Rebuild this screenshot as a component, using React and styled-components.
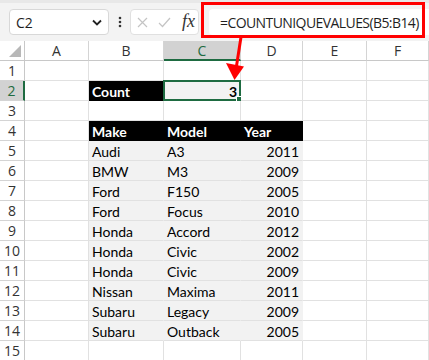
import React from "react"
import styled, { createGlobalStyle } from "styled-components"

const GlobalStyle = createGlobalStyle`
  body {
    margin: 0;
    background: #ffffff;
    overflow: hidden;
    font-family: Lato, "Liberation Sans", sans-serif;
  }
`

const Page = styled.div`
  position: relative;
  width: 429px;
  height: 360px;
  overflow: hidden;
`

const Toolbar = styled.div`
  background: #f3f3f3;
  border-top: 3px solid #e8e8e8;
  display: flex;
  align-items: center;
  padding: 0 0 0 9px;
  box-sizing: border-box;
  height: 41px;
`

const NameBox = styled.div`
  width: 100px;
  height: 26px;
  box-sizing: border-box;
  background: #fff;
  border: 1px solid #d8d8d8;
  border-radius: 4px;
  display: flex;
  align-items: center;
  justify-content: space-between;
  padding: 0 6px 0 6px;
  font-size: 14px;
  color: #1f1f1f;
  font-family: "Open Sans", "Liberation Sans", sans-serif;
`

const Dots = styled.div`
  width: 21px;
  display: flex;
  justify-content: center;
`

const FxBox = styled.div`
  width: 69px;
  height: 26px;
  box-sizing: border-box;
  background: #fff;
  border: 1px solid #e0e0e0;
  border-radius: 4px;
  display: flex;
  align-items: center;
  gap: 10px;
  padding-left: 6px;
`

const Fx = styled.span`
  font-family: "Liberation Serif", serif;
  font-style: italic;
  font-size: 18px;
  color: #333;
  margin-left: 1px;
  margin-top: -2px;
`

const FormulaInput = styled.div`
  margin-left: 10px;
  flex: 1;
  height: 26px;
  box-sizing: border-box;
  background: #fff;
  border-radius: 4px 0 0 4px;
  display: flex;
  align-items: center;
  padding-left: 11px;
  font-size: 14px;
  color: #1f1f1f;
  font-family: "Open Sans", "Liberation Sans", sans-serif;
  letter-spacing: -0.58px;
`

const Highlight = styled.div`
  position: absolute;
  left: 201px;
  top: 2px;
  width: 224px;
  height: 36px;
  box-sizing: border-box;
  border: 3px solid #ff0000;
  pointer-events: none;
`

const Arrow = styled.svg`
  position: absolute;
  left: 0;
  top: 0;
  pointer-events: none;
`

const Sheet = styled.div`
  display: grid;
  grid-template-columns: 25px 64px 75px 77px 62px 64px 62px;
  grid-auto-rows: 20px;
`

const Corner = styled.div`
  position: relative;
  background: #fff;
  border-right: 1px solid #c8c8c8;
  border-bottom: 1px solid #c8c8c8;
  box-sizing: border-box;
  &::after {
    content: "";
    position: absolute;
    right: 3px;
    bottom: 3px;
    border-style: solid;
    border-width: 0 0 12px 12px;
    border-color: transparent transparent #b8b8b8 transparent;
  }
`

const ColHead = styled.div`
  box-sizing: border-box;
  display: flex;
  align-items: center;
  justify-content: center;
  font-size: 14px;
  font-family: "Open Sans", "Liberation Sans", sans-serif;
  background: ${(p) => (p.active ? "#d2d2d2" : "#fff")};
  color: ${(p) => (p.active ? "#1e6b41" : "#333")};
  border-right: 1px solid #d4d4d4;
  border-bottom: ${(p) => (p.active ? "2px solid #1e6b41" : "1px solid #c8c8c8")};
`

const RowHead = styled.div`
  box-sizing: border-box;
  display: flex;
  align-items: center;
  justify-content: center;
  font-size: 14px;
  font-family: "Open Sans", "Liberation Sans", sans-serif;
  background: ${(p) => (p.active ? "#d2d2d2" : "#fff")};
  color: ${(p) => (p.active ? "#1e6b41" : "#333")};
  border-right: ${(p) => (p.active ? "2px solid #1e6b41" : "1px solid #c8c8c8")};
  border-bottom: 1px solid #d4d4d4;
`

const fills = { black: "#000", grey: "#f2f2f2", none: "#fff" }

const Cell = styled.div`
  position: relative;
  box-sizing: border-box;
  display: flex;
  align-items: center;
  justify-content: ${(p) => (p.right ? "flex-end" : "flex-start")};
  padding: 1px 3px 0;
  font-size: 14px;
  white-space: nowrap;
  background: ${(p) => fills[p.fill || "none"]};
  color: ${(p) => (p.fill === "black" ? "#fff" : "#000")};
  font-weight: ${(p) => (p.bold ? 700 : 400)};
  border-right: 1px solid ${(p) => (p.fill === "black" ? "#000" : p.fill === "grey" ? "#f2f2f2" : "#e1e1e1")};
  border-bottom: 1px solid ${(p) => (p.fill === "black" ? "#000" : "#e1e1e1")};
`

const Selection = styled.div`
  position: absolute;
  left: -1px;
  top: -1px;
  right: -1px;
  bottom: -1px;
  border: 2px solid #1e6b41;
  &::after {
    content: "";
    position: absolute;
    right: -4px;
    bottom: -4px;
    width: 5px;
    height: 5px;
    background: #1e6b41;
    border: 1px solid #fff;
  }
`

const columns = ["A", "B", "C", "D", "E", "F"]

const cars = [
  ["Audi", "A3", "2011"],
  ["BMW", "M3", "2009"],
  ["Ford", "F150", "2005"],
  ["Ford", "Focus", "2010"],
  ["Honda", "Accord", "2012"],
  ["Honda", "Civic", "2002"],
  ["Honda", "Civic", "2009"],
  ["Nissan", "Maxima", "2011"],
  ["Subaru", "Legacy", "2009"],
  ["Subaru", "Outback", "2005"],
]

const rowCells = (n) => {
  const blank = (key) => <Cell key={key} />
  if (n === 2) {
    return [
      blank("a"),
      <Cell key="b" fill="black" bold>Count</Cell>,
      <Cell key="c" fill="grey" bold right>3<Selection /></Cell>,
      blank("d"),
      blank("e"),
      blank("f"),
    ]
  }
  if (n === 4) {
    return [
      blank("a"),
      <Cell key="b" fill="black" bold>Make</Cell>,
      <Cell key="c" fill="black" bold>Model</Cell>,
      <Cell key="d" fill="black" bold>Year</Cell>,
      blank("e"),
      blank("f"),
    ]
  }
  if (n >= 5 && n <= 14) {
    const [make, model, year] = cars[n - 5]
    return [
      blank("a"),
      <Cell key="b" fill="grey">{make}</Cell>,
      <Cell key="c" fill="grey">{model}</Cell>,
      <Cell key="d" fill="grey" right>{year}</Cell>,
      blank("e"),
      blank("f"),
    ]
  }
  return columns.map((c) => blank(c))
}

const Chevron = () => (
  <svg width="10" height="7" viewBox="0 0 10 7">
    <path d="M1 1.5 L5 5.5 L9 1.5" fill="none" stroke="#222" strokeWidth="1.8" />
  </svg>
)

const App = () => {
  const rows = Array.from({ length: 15 }, (_, i) => i + 1)
  return (
    <Page>
      <GlobalStyle />
      <Toolbar>
        <NameBox>
          <span>C2</span>
          <Chevron />
        </NameBox>
        <Dots>
          <svg width="4" height="12" viewBox="0 0 4 12">
            <circle cx="2" cy="2" r="1.3" fill="#333" />
            <circle cx="2" cy="6" r="1.3" fill="#333" />
            <circle cx="2" cy="10" r="1.3" fill="#333" />
          </svg>
        </Dots>
        <FxBox>
          <svg width="11" height="11" viewBox="0 0 11 11">
            <path d="M1 1 L10 10 M10 1 L1 10" stroke="#c4c4c4" strokeWidth="1.2" />
          </svg>
          <svg width="13" height="11" viewBox="0 0 13 11">
            <path d="M1 6 L4.5 9.5 L12 1" fill="none" stroke="#c4c4c4" strokeWidth="1.2" />
          </svg>
          <Fx>fx</Fx>
        </FxBox>
        <FormulaInput>=COUNTUNIQUEVALUES(B5:B14)</FormulaInput>
      </Toolbar>
      <Sheet>
        <Corner />
        {columns.map((c) => (
          <ColHead key={c} active={c === "C"}>{c}</ColHead>
        ))}
        {rows.map((n) => (
          <React.Fragment key={n}>
            <RowHead active={n === 2}>{n}</RowHead>
            {rowCells(n)}
          </React.Fragment>
        ))}
      </Sheet>
      <Highlight />
      <Arrow width="429" height="360" viewBox="0 0 429 360">
        <line x1="241" y1="37" x2="236.5" y2="66" stroke="#ff0000" strokeWidth="3" />
        <polygon points="226,63 244,66.5 234.5,80" fill="#ff0000" />
      </Arrow>
    </Page>
  )
}

export default App
